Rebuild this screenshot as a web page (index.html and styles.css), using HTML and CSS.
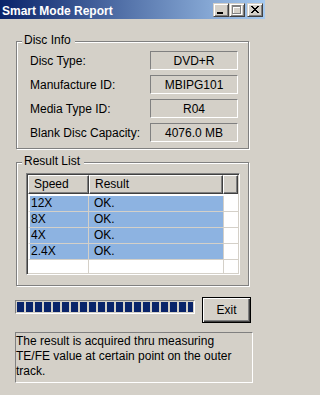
FILE: index.html
```html
<!DOCTYPE html>
<html>
<head>
<meta charset="utf-8">
<link rel="stylesheet" href="styles.css">
</head>
<body>
<div class="window">
  <div class="titlebar">
    <span class="title">Smart Mode Report</span>
    <div class="caption-buttons">
      <span class="cbtn"><svg width="14" height="12" viewBox="0 0 14 12" shape-rendering="crispEdges"><rect x="3" y="8" width="6" height="2" fill="#000"/></svg></span>
      <span class="cbtn"><svg width="14" height="12" viewBox="0 0 14 12" shape-rendering="crispEdges"><path fill="#fff" d="M3 2h9v2H3zM3 2h1v9H3zM11 2h1v9h-1zM3 10h9v1H3z"/><path fill="#808080" d="M2 1h9v2H2zM2 1h1v9H2zM10 1h1v9h-1zM2 9h9v1H2z"/></svg></span>
      <span class="cbtn close"><svg width="14" height="12" viewBox="0 0 14 12" shape-rendering="crispEdges"><g transform="translate(3 2)" fill="#000"><path d="M0 0h2v1H0zM6 0h2v1H6zM1 1h2v1H1zM5 1h2v1H5zM2 2h2v1H2zM4 2h2v1H4zM3 3h2v1H3zM2 4h2v1H2zM4 4h2v1H4zM1 5h2v1H1zM5 5h2v1H5zM0 6h2v1H0zM6 6h2v1H6z"/></g></svg></span>
    </div>
  </div>
  <div class="client">
    <div class="group group-disc">
      <div class="group-title">Disc Info</div>
      <div class="disc-grid">
        <div class="lbl">Disc Type:</div><div class="val">DVD+R</div>
        <div class="lbl">Manufacture ID:</div><div class="val">MBIPG101</div>
        <div class="lbl">Media Type ID:</div><div class="val">R04</div>
        <div class="lbl">Blank Disc Capacity:</div><div class="val">4076.0 MB</div>
      </div>
    </div>
    <div class="group group-result">
      <div class="group-title">Result List</div>
      <div class="result-body">
        <div class="listview">
          <div class="lv-inner">
            <div class="lv-header">
              <div class="hcell c1">Speed</div>
              <div class="hcell c2">Result</div>
              <div class="hcell c3"></div>
            </div>
            <div class="lv-rows">
              <div class="lv-row sel"><div class="cell c1">12X</div><div class="cell c2">OK.</div><div class="cell c3"></div></div>
              <div class="lv-row sel"><div class="cell c1">8X</div><div class="cell c2">OK.</div><div class="cell c3"></div></div>
              <div class="lv-row sel"><div class="cell c1">4X</div><div class="cell c2">OK.</div><div class="cell c3"></div></div>
              <div class="lv-row sel"><div class="cell c1">2.4X</div><div class="cell c2">OK.</div><div class="cell c3"></div></div>
              <div class="lv-row"><div class="cell c1"></div><div class="cell c2"></div><div class="cell c3"></div></div>
            </div>
          </div>
        </div>
      </div>
    </div>
    <div class="action-row">
      <div class="progress">
        <div class="blocks">
          <span class="blk"></span><span class="blk"></span><span class="blk"></span><span class="blk"></span><span class="blk"></span>
          <span class="blk"></span><span class="blk"></span><span class="blk"></span><span class="blk"></span><span class="blk"></span>
          <span class="blk"></span><span class="blk"></span><span class="blk"></span><span class="blk"></span><span class="blk"></span>
          <span class="blk"></span><span class="blk"></span><span class="blk"></span><span class="blk"></span><span class="blk"></span>
        </div>
      </div>
      <button class="exit">Exit</button>
    </div>
    <div class="note">The result is acquired thru measuring<br>TE/FE value at certain point on the outer<br>track.</div>
  </div>
</div>
</body>
</html>
```

FILE: styles.css
```css
* { box-sizing: border-box; }
html, body { margin: 0; padding: 0; }
body {
  background: #D4D0C8;
  font-family: "Liberation Sans", Arial, sans-serif;
  font-size: 12px;
  color: #000;
}
.window {
  width: 265px;
  height: 395px;
  background: #D4D0C8;
  overflow: hidden;
}
.titlebar {
  height: 19px;
  background: linear-gradient(to right, #0A246A, #A6CAF0);
  display: flex;
  justify-content: space-between;
  align-items: flex-start;
}
.title {
  color: #fff;
  font-weight: bold;
  line-height: 14px;
  padding: 4px 0 0 2px;
  white-space: nowrap;
}
.caption-buttons {
  display: flex;
  padding: 3px 2px 0 0;
}
.cbtn {
  display: block;
  width: 16px;
  height: 14px;
  border: 1px solid;
  border-color: #D4D0C8 #404040 #404040 #D4D0C8;
  box-shadow: inset 1px 1px 0 #fff, inset -1px -1px 0 #808080;
  background: #D4D0C8;
}
.cbtn svg { display: block; }
.cbtn.close { margin-left: 2px; }

.client { padding-top: 22px; }

.group {
  margin-left: 16px;
  width: 233px;
  border: 1px solid #808080;
  box-shadow: 1px 1px 0 #fff, inset 1px 1px 0 #fff;
}
.group-title {
  width: fit-content;
  margin: -9px 0 0 5px;
  padding: 0 4px 0 2px;
  line-height: 14px;
  background: #D4D0C8;
  white-space: nowrap;
}
.disc-grid {
  display: grid;
  grid-template-columns: 1fr 88px;
  row-gap: 5px;
  padding: 4px 10px 6px 13px;
}
.lbl {
  height: 19px;
  padding-top: 2px;
  line-height: 16px;
  white-space: nowrap;
}
.val {
  height: 19px;
  border: 1px solid;
  border-color: #808080 #fff #fff #808080;
  text-align: center;
  padding-top: 1px;
  line-height: 16px;
  white-space: nowrap;
}

.group-result { margin-top: 13px; }
.result-body { padding: 5px 8px 10px 9px; }
.listview {
  height: 102px;
  border: 1px solid;
  border-color: #808080 #fff #fff #808080;
  padding: 1px;
  background: #fff;
  box-shadow: inset 1px 1px 0 #404040, inset -1px -1px 0 #D4D0C8;
}
.lv-inner {
  height: 98px;
  overflow: hidden;
  background: #fff;
}
.lv-header { display: flex; }
.hcell {
  height: 19px;
  border-top: 1px solid #fff;
  border-left: 1px solid #fff;
  border-bottom: 1px solid #404040;
  border-right: 1px solid #404040;
  box-shadow: inset -1px -1px 0 #808080;
  background: #D4D0C8;
  padding: 1px 0 0 5px;
  line-height: 14px;
  white-space: nowrap;
}
.hcell.c1 { width: 61px; }
.hcell.c2 { width: 134px; }
.hcell.c3 { width: 15px; }
.lv-rows { margin-top: 2px; }
.lv-row { display: flex; height: 16px; }
.cell {
  height: 16px;
  border-bottom: 1px solid #D4D0C8;
  border-right: 1px solid #D4D0C8;
  line-height: 15px;
  white-space: nowrap;
}
.cell.c1 { width: 61px; border-left: 2px solid #fff; padding-left: 1px; }
.cell.c2 { width: 135px; padding-left: 5px; }
.cell.c3 { width: 14px; border-right: none; }
.lv-row.sel .c1, .lv-row.sel .c2 { background: #8DB3E1; }

.action-row {
  display: flex;
  align-items: flex-start;
  margin: 11px 0 0 15px;
}
.progress {
  width: 180px;
  height: 14px;
  margin-top: 3px;
  border: 1px solid;
  border-color: #808080 #fff #fff #808080;
  padding: 1px;
}
.blocks {
  display: flex;
  gap: 2px;
  height: 10px;
  overflow: hidden;
}
.blk {
  flex: 0 0 7px;
  height: 10px;
  background: #0A246A;
}
.exit {
  margin-left: 7px;
  width: 49px;
  height: 26px;
  padding: 0;
  font: inherit;
  color: #000;
  background: #D4D0C8;
  border: 1px solid #000;
  box-shadow: inset 1px 1px 0 #fff, inset -1px -1px 0 #404040, inset -2px -2px 0 #808080;
  line-height: 14px;
}
.note {
  margin: 9px 0 0 15px;
  width: 238px;
  height: 51px;
  border: 1px solid;
  border-color: #808080 #fff #fff #808080;
  padding-top: 1px;
  line-height: 15px;
  white-space: nowrap;
}
```
